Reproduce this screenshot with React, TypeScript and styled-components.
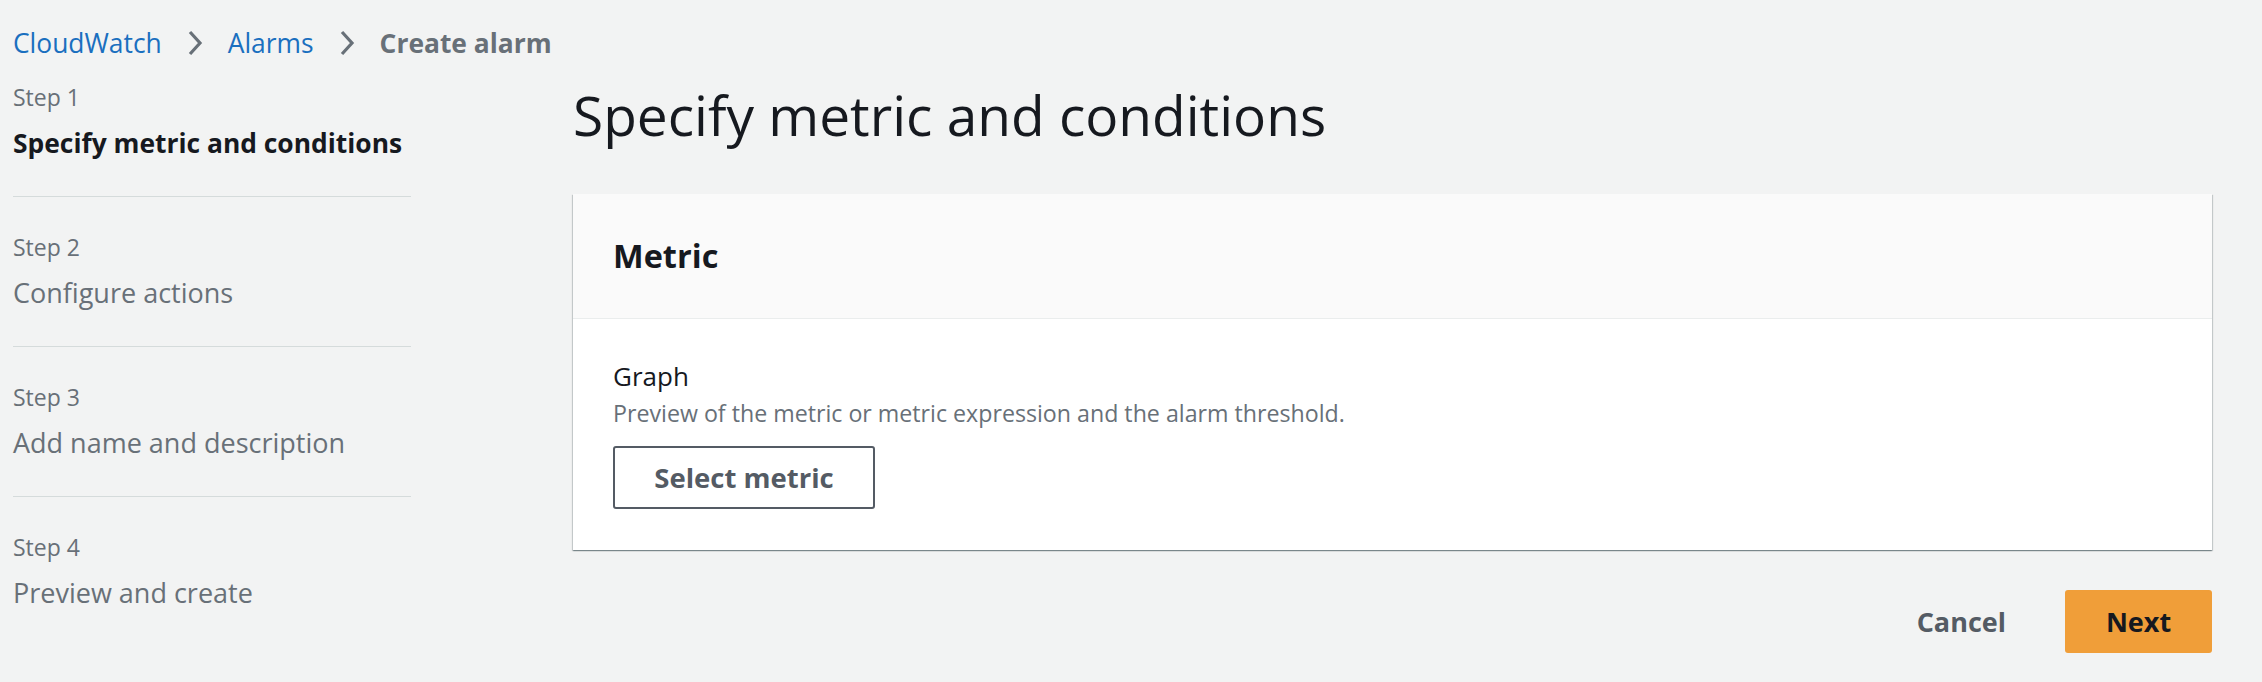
import styled, { createGlobalStyle } from 'styled-components';

const GlobalStyle = createGlobalStyle`
  html, body {
    margin: 0;
    padding: 0;
    background: #f2f3f3;
    font-family: "Open Sans", "Noto Sans", sans-serif;
    color: #16191f;
  }
`;

const steps = [
  { step: 'Step 1', label: 'Specify metric and conditions' },
  { step: 'Step 2', label: 'Configure actions' },
  { step: 'Step 3', label: 'Add name and description' },
  { step: 'Step 4', label: 'Preview and create' },
];

function Chevron() {
  return (
    <ChevronIcon width="16" height="28" viewBox="0 0 16 28" aria-hidden>
      <polyline points="3,3 13,14 3,25" fill="none" stroke="#687078" strokeWidth="3.2" strokeLinecap="butt" strokeLinejoin="miter" />
    </ChevronIcon>
  );
}

export default function App() {
  return (
    <>
      <GlobalStyle />
      <Page>
        <Breadcrumbs>
          <Crumb>CloudWatch</Crumb>
          <Chevron />
          <Crumb>Alarms</Crumb>
          <Chevron />
          <Crumb $current>Create alarm</Crumb>
        </Breadcrumbs>
        <Layout>
          <StepNav>
            {steps.map((s, i) => (
              <StepItem key={s.step} $first={i === 0} $last={i === steps.length - 1}>
                <StepNumber>{s.step}</StepNumber>
                <StepLabel $active={i === 0}>{s.label}</StepLabel>
              </StepItem>
            ))}
          </StepNav>
          <Main>
            <Title>Specify metric and conditions</Title>
            <Card>
              <CardHeader>
                <CardTitle>Metric</CardTitle>
              </CardHeader>
              <CardBody>
                <FieldLabel>Graph</FieldLabel>
                <FieldDescription>Preview of the metric or metric expression and the alarm threshold.</FieldDescription>
                <OutlineButton>Select metric</OutlineButton>
              </CardBody>
            </Card>
            <Actions>
              <LinkButton>Cancel</LinkButton>
              <PrimaryButton>Next</PrimaryButton>
            </Actions>
          </Main>
        </Layout>
      </Page>
    </>
  );
}

const Page = styled.div`
  width: 100%;
  min-height: 682px;
  box-sizing: border-box;
`;

const Breadcrumbs = styled.nav`
  display: flex;
  align-items: center;
  gap: 25px;
  height: 38px;
  padding: 24px 0 0 13px;
`;

const Crumb = styled.span<{ $current?: boolean }>`
  font-size: 26.4px;
  line-height: 38px;
  color: ${(p) => (p.$current ? '#687078' : '#1a6fbf')};
  font-weight: ${(p) => (p.$current ? 700 : 400)};
`;

const ChevronIcon = styled.svg`
  display: block;
  flex-shrink: 0;
`;

const Layout = styled.div`
  display: flex;
  align-items: flex-start;
`;

const StepNav = styled.ol`
  list-style: none;
  margin: 0;
  padding: 0 0 0 13px;
  width: 398px;
  flex-shrink: 0;
`;

const StepItem = styled.li<{ $first?: boolean; $last?: boolean }>`
  display: flex;
  flex-direction: column;
  gap: 13px;
  padding: ${(p) => (p.$first ? '20px' : '35px')} 0 35px;
  border-bottom: ${(p) => (p.$last ? 'none' : '1px solid #d5dbdb')};
`;

const StepNumber = styled.span`
  font-size: 23px;
  line-height: 30px;
  color: #687078;
`;

const StepLabel = styled.span<{ $active?: boolean }>`
  font-size: ${(p) => (p.$active ? '26.4px' : '27px')};
  line-height: 36px;
  color: ${(p) => (p.$active ? '#16191f' : '#687078')};
  font-weight: ${(p) => (p.$active ? 700 : 400)};
  white-space: nowrap;
`;

const Main = styled.main`
  flex: 1;
  margin-left: 162px;
  margin-right: 50px;
  display: flex;
  flex-direction: column;
`;

const Title = styled.h1`
  margin: 21px 0 47px;
  font-size: 55px;
  line-height: 64px;
  font-weight: 400;
  color: #16191f;
`;

const Card = styled.section`
  background: #ffffff;
  box-shadow: 0 1px 1px 0 rgba(0, 28, 36, 0.3), 1px 1px 1px 0 rgba(0, 28, 36, 0.15),
    -1px 1px 1px 0 rgba(0, 28, 36, 0.15);
`;

const CardHeader = styled.header`
  display: flex;
  align-items: center;
  height: 124px;
  padding: 0 40px;
  background: #fafafa;
  border-bottom: 1px solid #eaeded;
`;

const CardTitle = styled.h2`
  margin: 0;
  font-size: 32.5px;
  line-height: 40px;
  font-weight: 700;
  color: #16191f;
`;

const CardBody = styled.div`
  display: flex;
  flex-direction: column;
  align-items: flex-start;
  padding: 39px 40px 41px;
`;

const FieldLabel = styled.span`
  font-size: 26px;
  line-height: 36px;
  color: #16191f;
`;

const FieldDescription = styled.span`
  margin-top: 4px;
  font-size: 23.2px;
  line-height: 30px;
  color: #687078;
`;

const OutlineButton = styled.button`
  margin-top: 18px;
  height: 63px;
  width: 262px;
  box-sizing: border-box;
  border: 2px solid #545b64;
  border-radius: 3px;
  background: #ffffff;
  color: #545b64;
  font-family: inherit;
  font-size: 27.5px;
  font-weight: 700;
  cursor: pointer;
`;

const Actions = styled.div`
  display: flex;
  justify-content: flex-end;
  align-items: center;
  gap: 22px;
  margin-top: 40px;
`;

const LinkButton = styled.button`
  border: none;
  background: transparent;
  padding: 0 37px;
  height: 63px;
  color: #545b64;
  font-family: inherit;
  font-size: 27px;
  font-weight: 700;
  cursor: pointer;
`;

const PrimaryButton = styled.button`
  width: 147px;
  height: 63px;
  border: none;
  border-radius: 3px;
  background: #f09e39;
  color: #16191f;
  font-family: inherit;
  font-size: 27px;
  font-weight: 700;
  cursor: pointer;
`;
